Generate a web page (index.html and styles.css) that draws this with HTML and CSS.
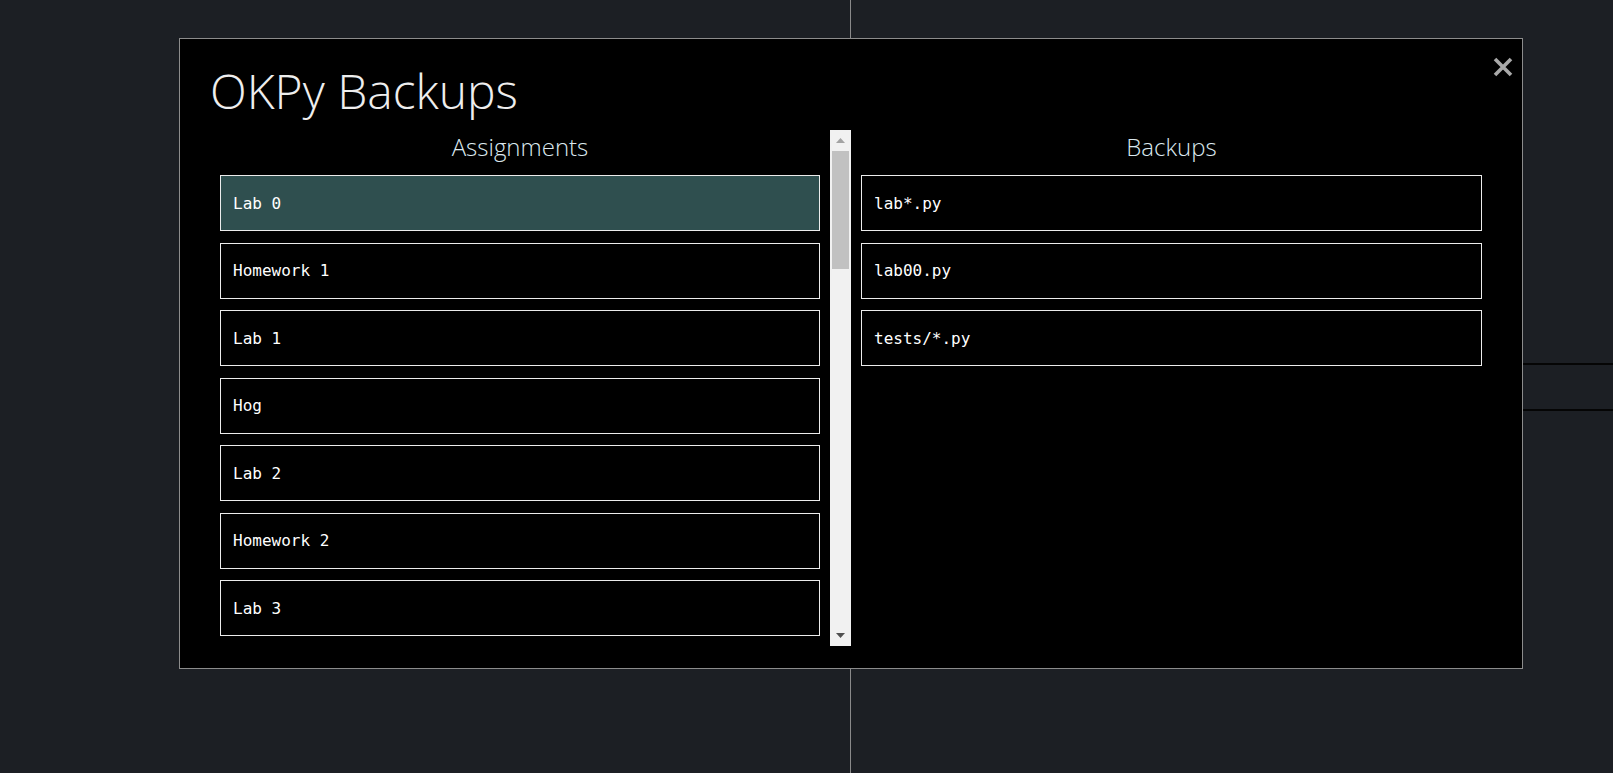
FILE: index.html
```html
<!DOCTYPE html>
<html lang="en">
<head>
    <meta charset="UTF-8">
    <meta name="viewport" content="width=device-width, initial-scale=1.0">
    <title>OKPy Backups</title>
    <link rel="stylesheet" href="styles.css">
</head>
<body>
    <div class="app">
        <div class="pane pane-left"></div>
        <div class="pane pane-right">
            <div class="pane-row"></div>
        </div>
    </div>

    <div class="modal">
        <button class="close" type="button" aria-label="Close">
            <svg width="20" height="20" viewBox="0 0 20 20">
                <path d="M2 2 L18 18 M18 2 L2 18" stroke="#a9a9a9" stroke-width="3.6" fill="none"/>
            </svg>
        </button>
        <h1 class="title">OKPy Backups</h1>
        <div class="columns">
            <div class="column column-scroll">
                <div class="list">
                    <h2 class="column-title">Assignments</h2>
                    <div class="item selected">Lab 0</div>
                    <div class="item">Homework 1</div>
                    <div class="item">Lab 1</div>
                    <div class="item">Hog</div>
                    <div class="item">Lab 2</div>
                    <div class="item">Homework 2</div>
                    <div class="item">Lab 3</div>
                </div>
                <div class="scrollbar">
                    <div class="scroll-btn">
                        <svg width="9" height="5" viewBox="0 0 9 5"><polygon points="4.5,0 9,5 0,5" fill="#a3a3a3"/></svg>
                    </div>
                    <div class="scroll-track">
                        <div class="scroll-thumb"></div>
                    </div>
                    <div class="scroll-btn">
                        <svg width="9" height="5" viewBox="0 0 9 5"><polygon points="0,0 9,0 4.5,5" fill="#505050"/></svg>
                    </div>
                </div>
            </div>
            <div class="column">
                <h2 class="column-title">Backups</h2>
                <div class="item">lab*.py</div>
                <div class="item">lab00.py</div>
                <div class="item">tests/*.py</div>
            </div>
        </div>
    </div>
</body>
</html>
```

FILE: styles.css
```css
body {
    margin: 0;
    padding: 0;
    background: #1c1f24;
    font-family: "Open Sans", "Liberation Sans", sans-serif;
    height: 773px;
    overflow: hidden;
}

/* app behind the dialog */
.app {
    display: flex;
    height: 773px;
}
.pane-left {
    width: 850px;
    border-right: 1px solid #8a8a8a;
}
.pane-right {
    flex: 1;
}
.pane-row {
    margin-top: 363px;
    height: 44px;
    border-top: 2px solid #050505;
    border-bottom: 2px solid #050505;
}

/* dialog */
.modal {
    position: fixed;
    left: 179px;
    top: 38px;
    width: 1344px;
    height: 631px;
    box-sizing: border-box;
    background: #000;
    border: 1px solid #8c8c8c;
    padding: 0 30px;
}
.close {
    position: absolute;
    top: 18px;
    right: 9px;
    width: 20px;
    height: 20px;
    padding: 0;
    border: none;
    background: none;
    cursor: pointer;
}
.close svg {
    display: block;
}
.title {
    margin: 22px 0 9px;
    font-size: 48px;
    line-height: 60px;
    font-weight: 300;
    color: #eeeeee;
}

.columns {
    display: flex;
    height: 516px;
}
.column {
    flex: 1;
    min-width: 0;
}
.column-scroll {
    display: flex;
}
.list {
    flex: 1;
    min-width: 0;
    overflow: hidden;
}
.column-title {
    margin: 2px 0 13px;
    text-align: center;
    font-size: 24px;
    line-height: 30px;
    font-weight: 300;
    color: #dbe8ef;
}
.item {
    display: flex;
    align-items: center;
    height: 56px;
    box-sizing: border-box;
    margin: 0 10px 11.5px;
    padding: 0 12px;
    border: 1px solid #ececec;
    font-family: "DejaVu Sans Mono", "Liberation Mono", monospace;
    font-size: 16px;
    color: #fff;
}
.item.selected {
    background: #2f4f4f;
}

/* classic scrollbar */
.scrollbar {
    width: 21px;
    display: flex;
    flex-direction: column;
    background: #f1f1f1;
}
.scroll-btn {
    height: 21px;
    display: flex;
    align-items: center;
    justify-content: center;
}
.scroll-btn svg {
    display: block;
}
.scroll-track {
    flex: 1;
}
.scroll-thumb {
    height: 118px;
    margin: 0 2px;
    background: #c1c1c1;
}
```
